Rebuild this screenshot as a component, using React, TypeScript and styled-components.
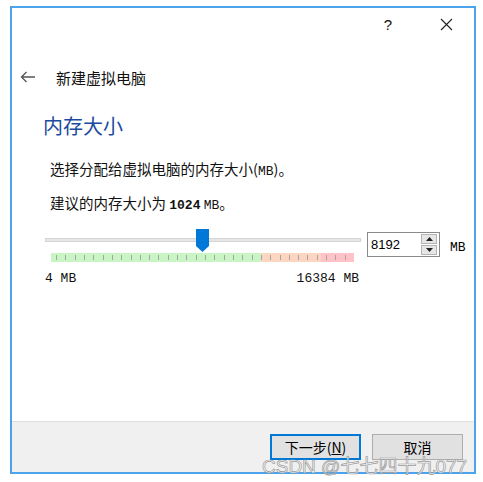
import styled, { createGlobalStyle } from "styled-components";

const GlobalStyle = createGlobalStyle`
  html, body {
    margin: 0;
    padding: 0;
    background: #ffffff;
  }
  body {
    font-family: "Noto Sans CJK SC", "Liberation Sans", sans-serif;
    color: #000;
  }
`;

const Page = styled.div`
  position: relative;
  width: 483px;
  height: 482px;
  padding: 6px 0 0 10px;
  box-sizing: border-box;
`;

const Window = styled.div`
  width: 466px;
  height: 468px;
  box-sizing: border-box;
  border: 2px solid #4ca3ec;
  display: flex;
  flex-direction: column;
  background: #fff;
`;

const TitleBar = styled.div`
  height: 33px;
  display: flex;
  justify-content: flex-end;
  align-items: center;
  gap: 12px;
  padding-right: 5px;
`;

const CaptionButton = styled.div`
  width: 46px;
  height: 33px;
  display: flex;
  align-items: center;
  justify-content: center;
  font-family: "Liberation Sans", sans-serif;
  font-size: 15px;
  color: #111;
`;

const Header = styled.div`
  margin-top: 21px;
  height: 30px;
  display: flex;
  align-items: center;
  gap: 20px;
  padding-left: 8px;
  font-size: 15px;
  color: #111;
`;

const Content = styled.div`
  padding-left: 31px;
  display: flex;
  flex-direction: column;
`;

const Heading = styled.div`
  margin-top: 20px;
  font-size: 20px;
  line-height: 28px;
  color: #1b4aa0;
`;

const Text = styled.div<{ $top: number }>`
  margin-top: ${(p) => p.$top}px;
  margin-left: 7px;
  font-size: 14.5px;
  line-height: 20px;
  color: #111;
`;

const Latin = styled.span<{ $bold?: boolean }>`
  font-family: "Liberation Mono", monospace;
  font-size: 13px;
  font-weight: ${(p) => (p.$bold ? 700 : 400)};
`;

const SliderRow = styled.div`
  margin-top: 13px;
  margin-left: 2px;
  display: flex;
  align-items: flex-start;
`;

const SliderBlock = styled.div`
  width: 316px;
  display: flex;
  flex-direction: column;
`;

const TrackArea = styled.div`
  position: relative;
  height: 24px;
  padding-top: 9px;
  box-sizing: border-box;
`;

const Track = styled.div`
  height: 4px;
  box-sizing: border-box;
  background: #e6e6e6;
  border: 1px solid #d6d6d6;
`;

const Thumb = styled.div`
  position: absolute;
  left: 151px;
  top: 0;
  width: 13px;
  height: 23px;
  background: #0078d7;
  clip-path: polygon(0 0, 100% 0, 100% 74%, 50% 100%, 0 74%);
`;

const TickBand = styled.div`
  margin-left: 6px;
  width: 303px;
  height: 9px;
  background: linear-gradient(
    to right,
    #c8f5c3 0%,
    #c8f5c3 69.3%,
    #fdd6c2 69.3%,
    #fdd6c2 89.1%,
    #ffc2c6 89.1%,
    #ffc2c6 100%
  );
  display: flex;
  justify-content: space-between;
  align-items: center;
  padding: 0 8px 0 5px;
  box-sizing: border-box;
`;

const Tick = styled.span`
  width: 1px;
  height: 5px;
  background: #a4a4a4;
`;

const ScaleLabels = styled.div`
  margin-top: 9px;
  width: 314px;
  display: flex;
  justify-content: space-between;
  line-height: 16px;
  color: #111;
`;

const SpinBox = styled.div`
  margin-left: 6px;
  margin-top: 3px;
  width: 73px;
  height: 25px;
  box-sizing: border-box;
  border: 1px solid #8a8a8a;
  display: flex;
  align-items: stretch;
  background: #fff;
`;

const SpinValue = styled.div`
  flex: 1;
  padding-left: 3px;
  display: flex;
  align-items: center;
  font-family: "Liberation Sans", sans-serif;
  font-size: 13px;
  color: #000;
`;

const SpinButtons = styled.div`
  width: 16px;
  margin: 1px 2px 1px 0;
  display: flex;
  flex-direction: column;
  gap: 1px;
`;

const SpinButton = styled.div`
  flex: 1;
  background: #e6e6e6;
  border: 1px solid #b4b4b4;
  display: flex;
  align-items: center;
  justify-content: center;
`;

const UnitLabel = styled.div`
  margin-left: 10px;
  margin-top: 3px;
  line-height: 25px;
`;

const Footer = styled.div`
  margin-top: auto;
  height: 51px;
  box-sizing: border-box;
  background: #f0f0f0;
  border-top: 1px solid #dfdfdf;
  display: flex;
  justify-content: flex-end;
  align-items: flex-start;
  gap: 11px;
  padding: 12px 11px 0 0;
`;

const Button = styled.div<{ $primary?: boolean }>`
  width: 91px;
  height: 26px;
  box-sizing: border-box;
  background: #e1e1e1;
  border: ${(p) => (p.$primary ? "2px solid #0078d7" : "1px solid #adadad")};
  display: flex;
  align-items: center;
  justify-content: center;
  font-size: 14px;
  color: #000;
`;

const Watermark = styled.div`
  position: absolute;
  left: 262px;
  top: 451px;
  font-family: "Liberation Sans", "Noto Sans CJK SC", sans-serif;
  font-size: 19px;
  color: rgba(255, 255, 255, 0.75);
  -webkit-text-stroke: 0.7px #9a9a9a;
  white-space: nowrap;
`;

function BackArrow() {
  return (
    <svg width="16" height="12" viewBox="0 0 16 12">
      <path d="M15 6H1.5M6.5 1L1.5 6l5 5" fill="none" stroke="#555" strokeWidth="1.3" />
    </svg>
  );
}

function CloseIcon() {
  return (
    <svg width="13" height="13" viewBox="0 0 13 13">
      <path d="M1 1l11 11M12 1L1 12" stroke="#222" strokeWidth="1.1" />
    </svg>
  );
}

function Triangle({ down }: { down?: boolean }) {
  return (
    <svg width="7" height="4" viewBox="0 0 7 4">
      <path d={down ? "M0 0h7L3.5 4z" : "M0 4h7L3.5 0z"} fill="#222" />
    </svg>
  );
}

const ticks = Array.from({ length: 32 }, (_, i) => i);

export default function App() {
  return (
    <Page>
      <GlobalStyle />
      <Window>
        <TitleBar>
          <CaptionButton>?</CaptionButton>
          <CaptionButton>
            <CloseIcon />
          </CaptionButton>
        </TitleBar>

        <Header>
          <BackArrow />
          <span>新建虚拟电脑</span>
        </Header>

        <Content>
          <Heading>内存大小</Heading>
          <Text $top={19}>
            选择分配给虚拟电脑的内存大小(<Latin>MB</Latin>)。
          </Text>
          <Text $top={11}>
            建议的内存大小为 <Latin $bold>1024</Latin> <Latin>MB</Latin>。
          </Text>

          <SliderRow>
            <SliderBlock>
              <TrackArea>
                <Track />
                <Thumb />
              </TrackArea>
              <TickBand>
                {ticks.map((i) => (
                  <Tick key={i} />
                ))}
              </TickBand>
              <ScaleLabels>
                <Latin>4 MB</Latin>
                <Latin>16384 MB</Latin>
              </ScaleLabels>
            </SliderBlock>
            <SpinBox>
              <SpinValue>8192</SpinValue>
              <SpinButtons>
                <SpinButton>
                  <Triangle />
                </SpinButton>
                <SpinButton>
                  <Triangle down />
                </SpinButton>
              </SpinButtons>
            </SpinBox>
            <UnitLabel>
              <Latin>MB</Latin>
            </UnitLabel>
          </SliderRow>
        </Content>

        <Footer>
          <Button $primary>
            下一步(<u>N</u>)
          </Button>
          <Button>取消</Button>
        </Footer>
      </Window>
      <Watermark>CSDN @七七四十九077</Watermark>
    </Page>
  );
}
